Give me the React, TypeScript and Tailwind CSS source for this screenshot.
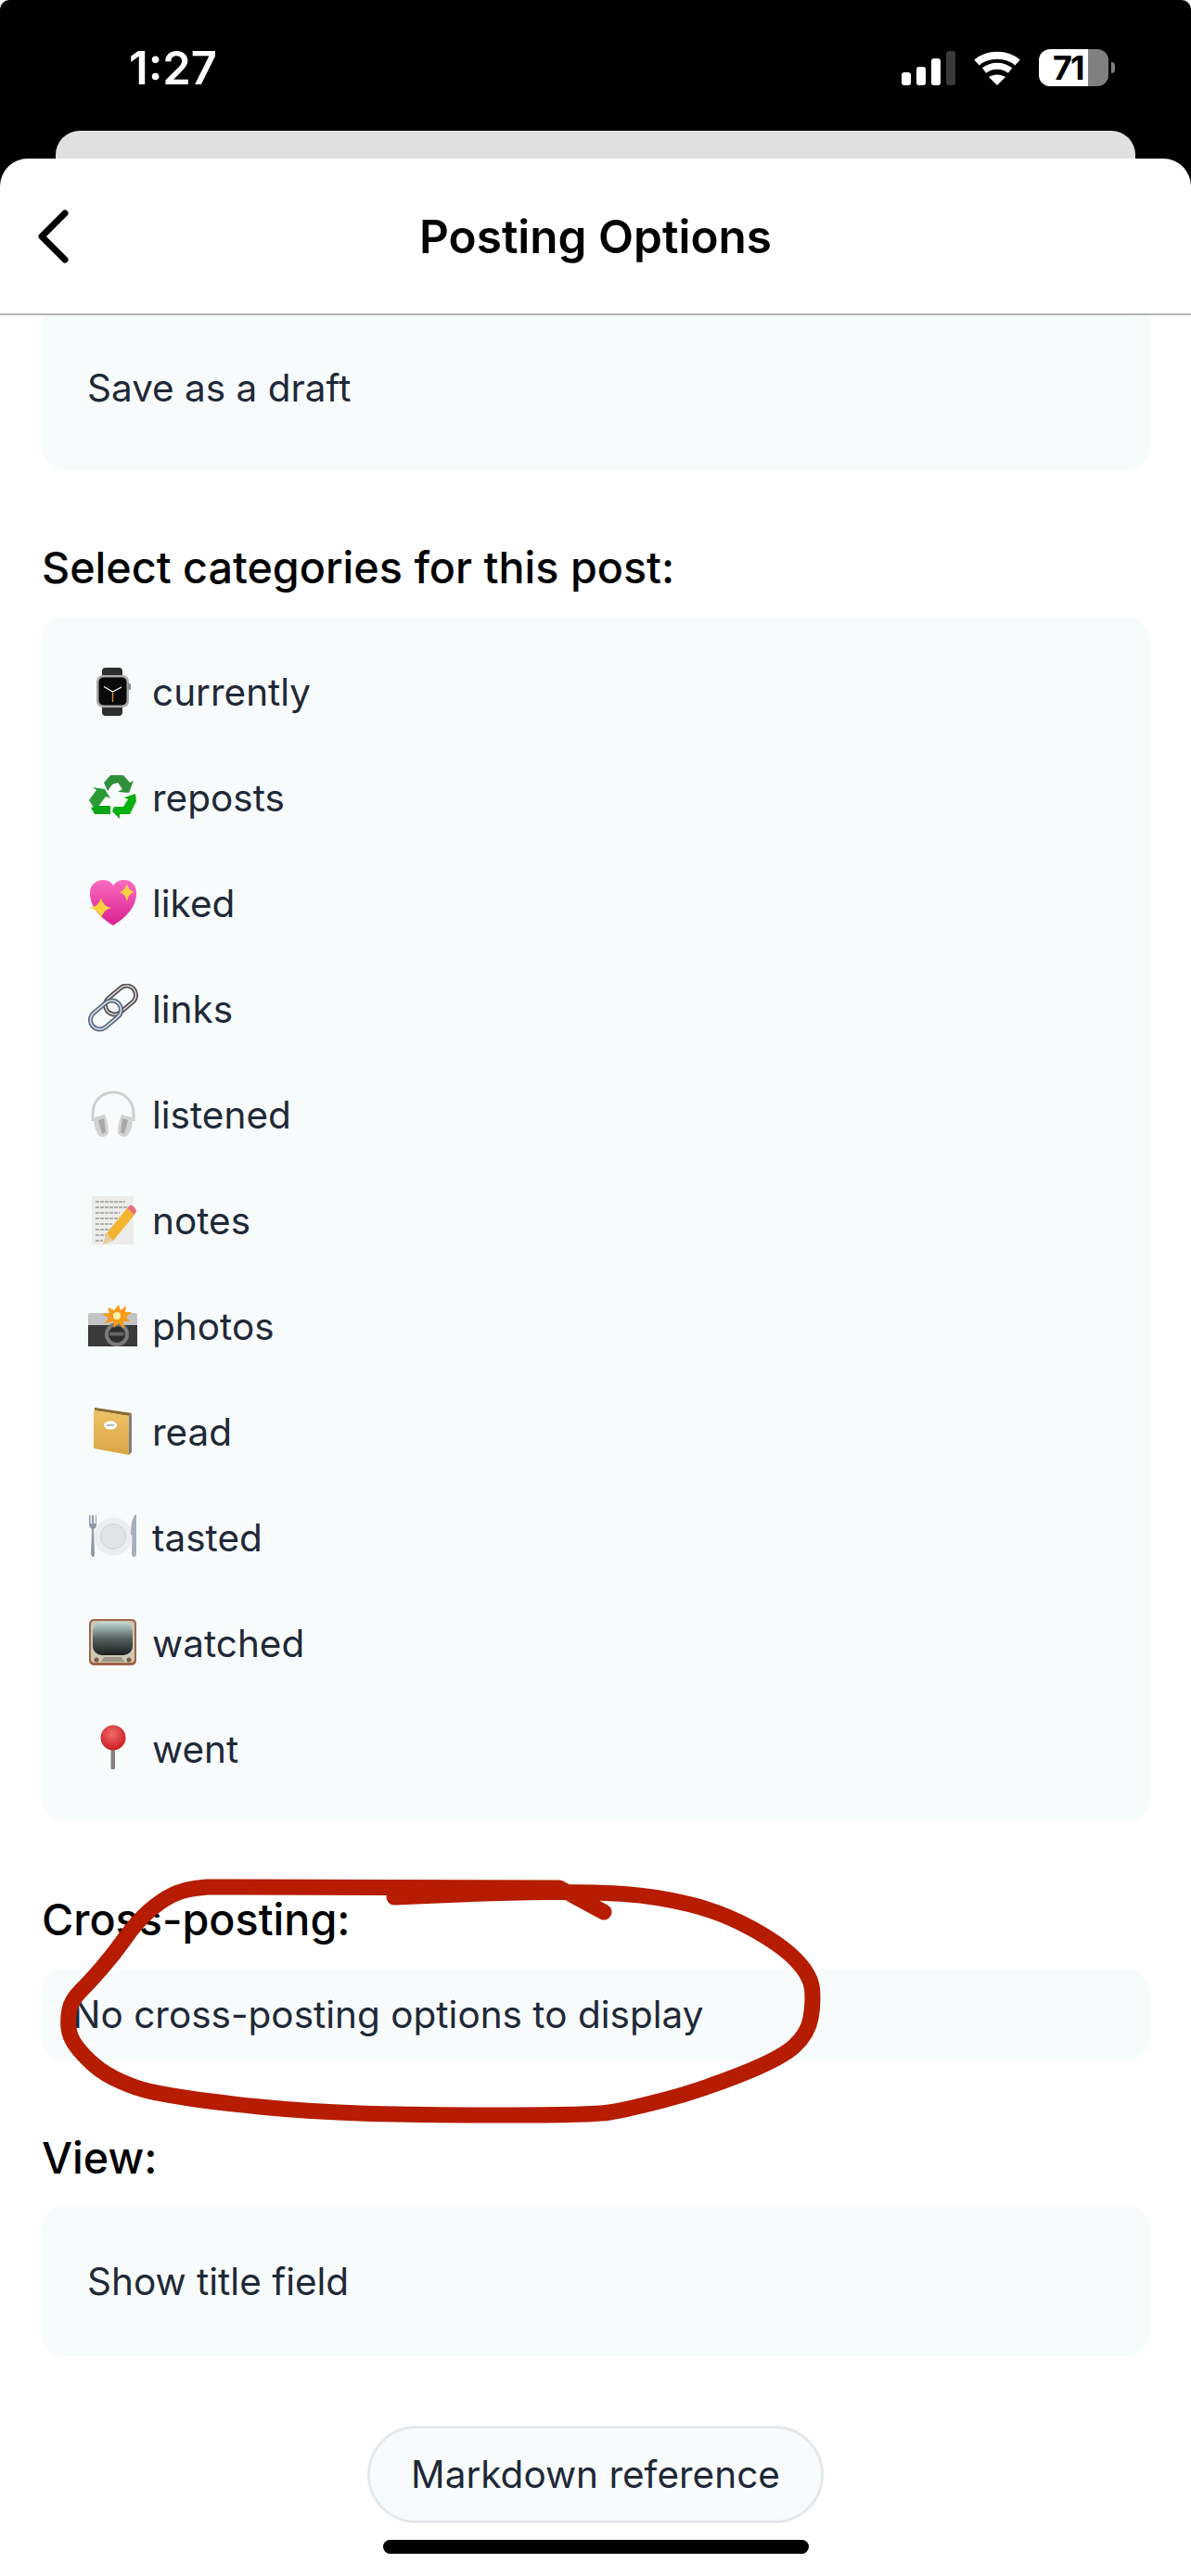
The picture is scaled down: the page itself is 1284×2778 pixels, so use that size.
import React from "react";

const Watch = () => (
  <svg viewBox="0 0 54 54" className="w-[54px] h-[54px]">
    <rect x="15" y="1" width="22" height="52" rx="4" fill="#2e2e2e" />
    <rect x="9" y="9" width="35" height="35" rx="7" fill="#a9a9a9" />
    <rect x="43" y="18" width="3" height="7" rx="1" fill="#8c8c8c" />
    <rect x="11.5" y="11.5" width="30" height="30" rx="5" fill="#0a0a0a" />
    <path d="M26.5 27L17 21.5M26.5 27L36 22" stroke="#fff" strokeWidth="1.4" />
    <path d="M26.5 27V38" stroke="#d98a1f" strokeWidth="1.4" />
  </svg>
);

const Recycle = () => (
  <svg viewBox="0 0 54 54" className="w-[54px] h-[54px]">
    <path d="M17 11L24 3H38L45 11L49 9L44 22L32 21L37 18L32 11L26 13L21 20Z" fill="#2f8f3c" />
    <path d="M1 30L9 19L5 16L18 18L24 28L19 26L13 34L10 38H6Z" fill="#2a9a35" />
    <path d="M3 38L7 45H24V36H11Z" fill="#0ca515" />
    <path d="M28 37H38L43 29L39 27L51 23L52 31L45 45H34V50L26 42Z" fill="#08b010" />
  </svg>
);

const Heart = () => (
  <svg viewBox="0 0 54 54" className="w-[54px] h-[54px]">
    <defs>
      <linearGradient id="heartFill" x1="0" y1="0" x2="0" y2="1">
        <stop offset="0" stopColor="#fb6bc0" />
        <stop offset="1" stopColor="#d81f90" />
      </linearGradient>
    </defs>
    <path d="M27 51C14 43 2 32 2 16C2 7 9 2 16 2C21 2 25 4 27 8C30 4 33 2 39 2C47 2 52 8 52 16C52 32 40 43 27 51Z" fill="url(#heartFill)" />
    <path d="M13 21Q15 31 24 32Q15 34 13 44Q11 34 0 32Q11 31 13 21Z" fill="#fbd23f" transform="translate(1 0)" />
    <path d="M42 6Q43 13 50 15Q43 17 42 25Q40 17 34 15Q40 13 42 6Z" fill="#fbd23f" />
  </svg>
);

const Links = () => (
  <svg viewBox="0 0 54 54" className="w-[54px] h-[54px]" fill="none">
    <rect x="25" y="-1" width="20" height="37" rx="10" transform="rotate(50 35 17.5)" stroke="#5f4f4d" strokeWidth="5" />
    <rect x="25" y="-1" width="20" height="37" rx="10" transform="rotate(50 35 17.5)" stroke="#c9d6e4" strokeWidth="1.5" />
    <rect x="9" y="15" width="20" height="37" rx="10" transform="rotate(50 19 33.5)" stroke="#5d6b7a" strokeWidth="5" />
    <rect x="9" y="15" width="20" height="37" rx="10" transform="rotate(50 19 33.5)" stroke="#d4e3f2" strokeWidth="1.5" />
  </svg>
);

const Headphones = () => (
  <svg viewBox="0 0 54 54" className="w-[54px] h-[54px]" fill="none">
    <path d="M5 34V26C5 12 15 3 27 3C39 3 49 12 49 26V34" stroke="#cfcfcf" strokeWidth="3" />
    <path d="M7 30L18 27C21 33 22 42 22 47C20 51 15 52 12 50C8 45 5 37 7 30Z" fill="#d2d2d2" />
    <path d="M47 30L36 27C33 33 32 42 32 47C34 51 39 52 42 50C46 45 49 37 47 30Z" fill="#d2d2d2" />
    <path d="M11 33L17 31L19 46L15 48Z" fill="#a8a8a8" />
    <path d="M43 33L37 31L35 46L39 48Z" fill="#a8a8a8" />
  </svg>
);

const Memo = () => (
  <svg viewBox="0 0 54 54" className="w-[54px] h-[54px]">
    <rect x="4" y="1" width="45" height="52" fill="#ececea" />
    <path d="M8 7H40M8 13H42M8 19H34M8 25H38M8 31H26M8 37H24M8 43H20M8 49H16" stroke="#77756f" strokeWidth="1.2" strokeDasharray="4 1" />
    <path d="M16 53L20 41L42 14L50 21L27 49Z" fill="#f4b52e" />
    <path d="M42 14L45 11C47 10 51 13 52 17L50 21Z" fill="#e7707a" />
    <path d="M16 53L20 41L27 49Z" fill="#e8cfa2" />
  </svg>
);

const Camera = () => (
  <svg viewBox="0 0 54 54" className="w-[54px] h-[54px]">
    <rect x="0" y="13" width="53" height="14" rx="2" fill="#c4c4c4" />
    <rect x="0" y="26" width="53" height="23" fill="#3a3a3a" />
    <circle cx="31" cy="36" r="13" fill="#7a7a7a" />
    <circle cx="31" cy="36" r="9" fill="#2d2d2d" />
    <rect x="23" y="33.5" width="16" height="4" rx="2" fill="#666" />
    <path d="M33 4L35 10L41 5L40 12L47 12L41 17L45 22L38 22L39 30L33 24L28 29L27 22L18 24L22 18L15 14L23 13L21 7L28 10Z" fill="#f89a1c" />
    <circle cx="31" cy="16" r="4" fill="#fff2a8" />
  </svg>
);

const Ledger = () => (
  <svg viewBox="0 0 54 54" className="w-[54px] h-[54px]">
    <defs>
      <linearGradient id="ledgerCover" x1="0" y1="0" x2="0" y2="1">
        <stop offset="0" stopColor="#eec266" />
        <stop offset="1" stopColor="#d9a646" />
      </linearGradient>
    </defs>
    <path d="M47 7L47 49L44 52L44 10Z" fill="#7d7f86" />
    <path d="M7 1L47 7L44 10L7 4Z" fill="#8a6a2c" />
    <path d="M6 4L44 10V52L6 45Z" fill="url(#ledgerCover)" />
    <ellipse cx="24" cy="20" rx="7" ry="4.5" fill="#fff" />
    <path d="M20 20H28" stroke="#777" strokeWidth="1" />
  </svg>
);

const Plate = () => (
  <svg viewBox="0 0 54 54" className="w-[54px] h-[54px]">
    <circle cx="27" cy="26" r="20.5" fill="#ecedee" />
    <circle cx="27" cy="26" r="13.5" fill="#e2e3e6" stroke="#c6d0dc" strokeWidth="1" />
    <path d="M1 3V13C1 16 3 17 4 18L3 45C4 49 7 49 7 45L6 18C8 17 9 16 9 13V3H8V12H6V3H4V12H2.5V3Z" fill="#8f9aa8" />
    <path d="M51 2C47 7 46 15 46 24L47.5 25L47 45C47.5 49 51.5 49 52 45V3Z" fill="#a4b0ba" />
  </svg>
);

const Tv = () => (
  <svg viewBox="0 0 54 54" className="w-[54px] h-[54px]">
    <defs>
      <linearGradient id="tvScreen" x1="0" y1="0" x2="0" y2="1">
        <stop offset="0" stopColor="#c5dbd6" />
        <stop offset="0.5" stopColor="#556360" />
        <stop offset="1" stopColor="#1d1f1f" />
      </linearGradient>
    </defs>
    <rect x="1" y="1" width="51" height="50" rx="5" fill="#a0654a" />
    <rect x="3" y="3" width="47" height="45" rx="4" fill="#cfc8b4" />
    <rect x="5" y="4" width="43" height="36" rx="10" fill="url(#tvScreen)" />
    <circle cx="9" cy="45" r="2.5" fill="#7b5a3e" />
    <circle cx="44" cy="45" r="2.5" fill="#7b5a3e" />
    <path d="M14 47L17 42H36L39 47Z" fill="#9d9685" />
  </svg>
);

const Pin = () => (
  <svg viewBox="0 0 54 54" className="w-[54px] h-[54px]">
    <defs>
      <radialGradient id="pinHead" cx="0.45" cy="0.35" r="0.7">
        <stop offset="0" stopColor="#f06a68" />
        <stop offset="1" stopColor="#c7171d" />
      </radialGradient>
    </defs>
    <rect x="24.5" y="20" width="4.5" height="29" rx="1" fill="#87807a" />
    <circle cx="27" cy="15" r="13.5" fill="url(#pinHead)" />
  </svg>
);

const categories: { name: string; Icon: () => React.ReactElement }[] = [
  { name: "currently", Icon: Watch },
  { name: "reposts", Icon: Recycle },
  { name: "liked", Icon: Heart },
  { name: "links", Icon: Links },
  { name: "listened", Icon: Headphones },
  { name: "notes", Icon: Memo },
  { name: "photos", Icon: Camera },
  { name: "read", Icon: Ledger },
  { name: "tasted", Icon: Plate },
  { name: "watched", Icon: Tv },
  { name: "went", Icon: Pin },
];

// red marker stroke, full-page coordinates
const scribble = [
  [651, 2062], [603, 2036], [223, 2035], [197, 2038], [173, 2050], [147, 2073],
  [123, 2107], [97, 2137], [77, 2157], [73, 2177], [75, 2197], [90, 2217],
  [113, 2237], [147, 2252], [173, 2258], [230, 2267], [330, 2277], [446, 2281],
  [638, 2281], [676, 2275], [753, 2255], [842, 2220], [871, 2193], [877, 2160],
  [874, 2130], [842, 2097], [778, 2062], [708, 2045], [638, 2040], [542, 2041],
  [426, 2046], [424, 2046],
];

const scribblePath = scribble.reduce((d, [x, y], i) => {
  if (i === 0) return `M${x} ${y}`;
  const [px, py] = scribble[i - 1];
  if (i === 1 || i === 2) return `${d}L${x} ${y}`;
  return `${d}Q${px} ${py} ${(px + x) / 2} ${(py + y) / 2}`;
}, "");

const StatusBar = () => (
  <div className="h-[141px] flex justify-between items-start pl-[139px] pr-[82px] pt-[52px] text-white">
    <div className="text-[49px] leading-[44px] font-semibold">1:27</div>
    <div className="flex items-center gap-[20px] pt-[1px]">
      <div className="flex items-end gap-[6px] h-[37px]">
        <div className="w-[10px] h-[14px] rounded-[3px] bg-white" />
        <div className="w-[10px] h-[20px] rounded-[3px] bg-white" />
        <div className="w-[10px] h-[29px] rounded-[3px] bg-white" />
        <div className="w-[10px] h-[37px] rounded-[3px] bg-[#3a3a3a]" />
      </div>
      <svg viewBox="0 0 50 37" className="w-[50px] h-[37px]" fill="none" stroke="#fff">
        <path d="M3 12.5C14.5 2 35.5 2 47 12.5" strokeWidth="8" />
        <path d="M11 21C19 14.5 31 14.5 39 21" strokeWidth="7" />
        <path d="M25 37L16 28C21 24.5 29 24.5 34 28Z" fill="#fff" stroke="none" />
      </svg>
      <div className="flex items-center gap-[3px]">
        <div className="w-[75px] h-[40px] rounded-[12px] bg-[linear-gradient(90deg,#ffffff_53px,#808080_53px)]">
          <div className="pl-[15px] text-black text-[36px] leading-[40px] font-bold tracking-[-2px]">71</div>
        </div>
        <div className="w-[4px] h-[12px] rounded-r-full bg-[#808080]" />
      </div>
    </div>
  </div>
);

export default function App() {
  return (
    <div className="relative h-[2778px] bg-black rounded-t-[10px] overflow-hidden font-['Inter',sans-serif]">
      <StatusBar />
      <div className="h-[30px] mx-[60px] rounded-t-[26px] bg-[#e0e0e0]" />
      <div className="h-[2607px] rounded-t-[30px] bg-white">
        <div className="relative h-[169px] flex items-center justify-center border-b-2 border-[#b5b5b5]">
          <svg viewBox="0 0 34 58" className="absolute left-[40px] top-[55px] w-[34px] h-[58px]" fill="none" stroke="#000" strokeWidth="7" strokeLinecap="round" strokeLinejoin="round">
            <path d="M30 4L5 29L30 54" />
          </svg>
          <div className="text-[49.5px] leading-[60px] font-semibold text-black">Posting Options</div>
        </div>

        <div className="px-[45px] text-[#1f2937] text-[40.5px]">
          <div className="h-[167px] flex items-center pl-[49px] pb-[8px] bg-[#f8fbfc] rounded-b-[24px]">Save as a draft</div>

          <div className="mt-[74px] text-[46.7px] leading-[62px] font-medium text-black">Select categories for this post:</div>
          <div className="mt-[22px] pt-[24px] pb-[21px] bg-[#f8fbfc] rounded-[24px]">
            {categories.map(({ name, Icon }) => (
              <div key={name} className="h-[114px] flex items-center gap-[15px] pl-[50px]">
                <Icon />
                <span className="pt-[2px]">{name}</span>
              </div>
            ))}
          </div>

          <div className="mt-[75px] text-[46.7px] leading-[62px] font-medium text-black">Cross-posting:</div>
          <div className="mt-[22px] h-[99px] flex items-center pl-[33px] pt-[2px] bg-[#f8fbfc] rounded-[24px]">No cross-posting options to display</div>

          <div className="mt-[74px] text-[46.7px] leading-[62px] font-medium text-black">View:</div>
          <div className="mt-[21px] h-[162px] flex items-center pl-[49px] pt-[2px] bg-[#f8fbfc] rounded-[24px]">Show title field</div>

          <div className="mt-[75px] flex justify-center">
            <div className="w-[492px] h-[105px] flex items-center justify-center pt-[2px] rounded-full border-[3px] border-[#e5e7eb] bg-[#f8fbfc]">Markdown reference</div>
          </div>
          <div className="mt-[18px] mx-auto w-[459px] h-[15px] rounded-full bg-black" />
        </div>
      </div>

      {/* the red marker scribble drawn over the screenshot */}
      <svg viewBox="0 0 1284 2778" className="absolute inset-0 w-[1284px] h-[2778px] pointer-events-none" fill="none">
        <path d={scribblePath} stroke="#b51c00" strokeWidth="17" strokeLinecap="round" strokeLinejoin="round" />
      </svg>
    </div>
  );
}
